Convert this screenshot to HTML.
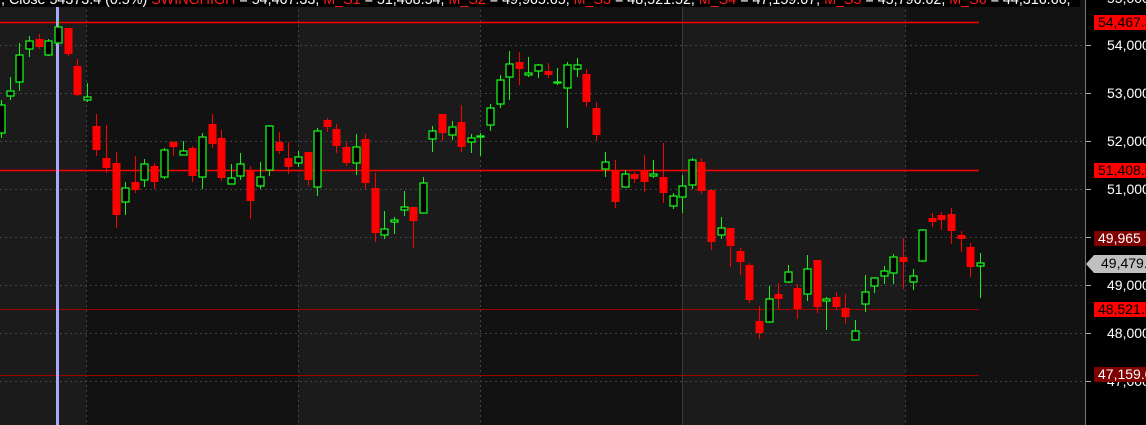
<!DOCTYPE html>
<html><head><meta charset="utf-8"><style>
html,body{margin:0;padding:0;background:#000;width:1146px;height:425px;overflow:hidden;font-family:"Liberation Sans",sans-serif;position:relative}
#c{position:absolute;left:0;top:0}
.top{position:absolute;left:0;top:0;width:1080px;height:7px;background:#000;overflow:hidden}
.top span.t{position:absolute;left:1px;top:-7px;font-size:14.3px;line-height:14px;color:#fff;white-space:nowrap}
.r{color:#ff1a1a}
.lab{position:absolute;left:1107px;font-size:14px;color:#fff;line-height:14px}
.box{position:absolute;left:1094px;width:52px;height:15px;font-size:14px;line-height:15px;padding-left:4px;box-sizing:border-box;white-space:nowrap;overflow:hidden}
</style></head><body>
<svg id="c" width="1146" height="425" xmlns="http://www.w3.org/2000/svg"></svg>
<div class="top"><span class="t">, Close 54373.4 (0.5%) <span class="r">SWINGHIGH</span> = 54,467.33, <span class="r">M_S1</span> = 51,408.54, <span class="r">M_S2</span> = 49,965.65, <span class="r">M_S3</span> = 48,521.52, <span class="r">M_S4</span> = 47,159.07, <span class="r">M_S5</span> = 45,796.62, <span class="r">M_S6</span> = 44,316.66,</span></div>
<div class="lab" style="top:-9px">55,000</div>
<div class="lab" style="top:38px">54,000</div>
<div class="lab" style="top:86px">53,000</div>
<div class="lab" style="top:134px">52,000</div>
<div class="lab" style="top:182px">51,000</div>
<div class="lab" style="top:278px">49,000</div>
<div class="lab" style="top:326px">48,000</div>
<div class="lab" style="top:374px">47,000</div>
<div class="box" style="top:15px;background:#ff0000;color:#000">54,467.33</div>
<div class="box" style="top:163px;background:#ff0000;color:#000">51,408.54</div>
<div class="box" style="top:231px;background:#800000;color:#fff">49,965</div>
<div class="box" style="top:302px;background:#ff0000;color:#000">48,521.52</div>
<div class="box" style="top:367px;background:#800000;color:#fff">47,159.07</div>
<svg style="position:absolute;left:1086px;top:255px" width="60" height="18"><polygon points="0,9 8,0 60,0 60,18 8,18" fill="#c0c0c0"/></svg>
<div class="box" style="top:256px;left:1097px;width:49px;background:transparent;color:#000">49,479.</div>
<script>
var s=document.getElementById('c'),h='';
function R(x,y,w,hh,f){h+='<rect x="'+x+'" y="'+y+'" width="'+w+'" height="'+hh+'" fill="'+f+'"/>';}
function L(x1,y1,x2,y2,c,w,d){h+='<line x1="'+x1+'" y1="'+y1+'" x2="'+x2+'" y2="'+y2+'" stroke="'+c+'" stroke-width="'+(w||1)+'"'+(d?' stroke-dasharray="'+d+'"':'')+'/>';}
R(0,0,1085,425,'#121212');
R(0,0,86,425,'#1b1b1b');R(298,0,182,425,'#1b1b1b');R(682,0,223,425,'#1b1b1b');
[45,93,141,189,237,285,333,381].forEach(function(y){L(0,y+.5,1085,y+.5,'#444',1,'2,3');L(1086,y+.5,1091,y+.5,'#aaa');});
[86,298,480,905].forEach(function(x){L(x+.5,0,x+.5,425,'#444',1,'2,3');});
L(682.5,0,682.5,425,'#3a3a3a');
L(1085.5,0,1085.5,425,'#777');
L(0,22.5,979,22.5,'#ff0000',1.5);L(0,170.5,979,170.5,'#ff0000',1.5);
L(0,309.5,979,309.5,'#a00000',1);L(0,375.5,979,375.5,'#a00000',1);
R(56,0,3,425,'#a8a8ff');
var d=[
[1,105,133,100,138,'g'],[10,91,96,77,100,'g'],[19,55,82,43,91,'g'],[29,41,49,36,57,'g'],[39,39,47,34,49,'r'],[48,41,55,39,56,'g'],[58,27,43,20,44,'g'],[68,28,54,28,56,'r'],[77,66,95,59,96,'r'],[87,97,100,83,102,'g'],[96,126,150,114,156,'r'],[106,158,168,125,173,'r'],[116,163,215,152,228,'r'],[125,188,202,182,215,'g'],[135,182,190,156,193,'r'],[144,164,180,159,187,'g'],[154,166,182,163,189,'r'],[164,150,177,148,179,'g'],[173,142,147,141,156,'r'],[183,151,155,141,155,'g'],[192,148,176,146,182,'r'],[202,137,177,133,189,'g'],[212,124,144,114,148,'r'],[221,138,178,130,181,'r'],[231,178,184,164,184,'g'],[240,164,176,153,180,'g'],[250,170,201,166,219,'r'],[260,177,186,162,189,'g'],[269,126,170,125,176,'g'],[279,142,151,132,154,'r'],[288,158,167,142,174,'r'],[298,157,163,151,167,'g'],
[308,152,180,152,186,'r'],[317,131,187,128,196,'g'],[327,120,127,118,132,'r'],[336,129,146,124,153,'r'],[346,147,163,142,166,'r'],[356,147,163,134,175,'g'],[365,139,183,134,189,'r'],[375,188,233,173,242,'r'],[384,229,235,211,239,'g'],[394,220,222,217,234,'g'],[404,207,210,191,216,'g'],[413,207,221,207,248,'r'],[423,183,213,177,213,'g'],[432,131,139,126,152,'g'],[442,114,133,114,141,'r'],[452,127,135,121,140,'g'],[461,122,147,105,152,'r'],[471,138,142,134,153,'g'],[480,136,137,133,156,'g'],[490,108,125,104,131,'g'],[500,80,104,75,108,'g'],[509,64,77,51,100,'g'],[519,62,69,52,85,'r'],[528,73,75,57,77,'g'],[538,65,71,64,78,'g'],[548,71,75,63,78,'r'],[557,82,83,68,85,'g'],[567,65,88,62,128,'g'],[577,65,69,58,77,'g'],[586,74,102,69,107,'r'],[596,108,135,102,141,'r'],
[605,162,169,152,177,'g'],[615,170,202,160,208,'r'],[625,174,187,170,187,'g'],[634,174,179,172,183,'r'],[644,170,182,155,192,'r'],[653,174,176,160,178,'g'],[663,177,193,143,203,'r'],[673,196,206,193,209,'g'],[682,186,197,175,213,'g'],[692,160,185,158,189,'g'],[701,162,191,158,194,'r'],[711,190,242,190,250,'r'],[721,228,235,217,239,'g'],[730,228,246,228,267,'r'],[740,251,262,248,275,'r'],[749,265,300,263,303,'r'],[759,321,333,306,339,'r'],[769,299,322,286,323,'g'],[778,294,299,283,309,'r'],[788,272,282,265,283,'g'],[797,288,309,284,319,'r'],[807,269,294,255,301,'g'],[817,260,307,260,313,'r'],[826,299,301,297,330,'g'],[836,297,307,292,310,'r'],[845,308,317,294,324,'r'],[855,331,340,320,340,'g'],[865,292,304,275,312,'g'],[874,278,286,277,293,'g'],[884,271,276,266,284,'g'],[893,257,273,254,284,'g'],[903,257,262,238,289,'r'],[913,276,282,269,290,'g'],[922,230,261,229,262,'g'],[932,218,222,213,227,'r'],[941,215,220,212,230,'r'],[951,214,231,208,244,'r'],[961,235,239,231,252,'r'],[970,247,267,243,277,'r'],[980,263,266,253,298,'g']];
d.forEach(function(c){var x=c[0],col=c[5]=='g'?'#19f019':'#ff0000';
L(x+.5,c[3],x+.5,c[4],col,1);
if(c[5]=='g'){h+='<rect x="'+(x-3)+'" y="'+c[1]+'" width="7" height="'+Math.max(1,c[2]-c[1])+'" fill="#000" stroke="'+col+'" stroke-width="1.3"/>';}
else R(x-3.5,c[1],8,Math.max(1,c[2]-c[1]),col);});
s.innerHTML=h;
</script>
</body></html>
